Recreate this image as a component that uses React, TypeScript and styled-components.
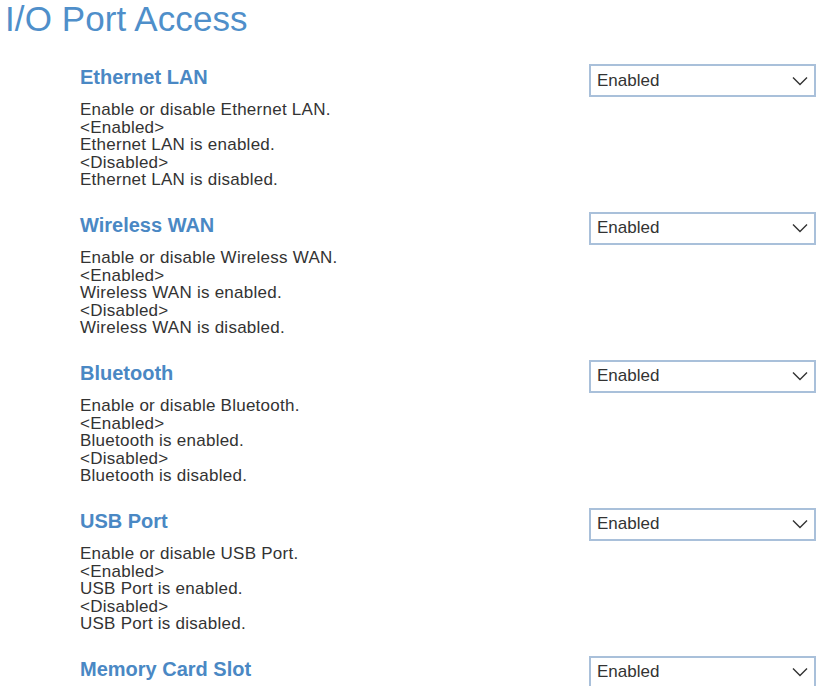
import React from "react";
import styled, { createGlobalStyle } from "styled-components";

const Global = createGlobalStyle`
  html, body { margin: 0; padding: 0; background: #ffffff; }
  body { font-family: "Liberation Sans", Arial, sans-serif; color: #333333; }
`;

const Page = styled.div`
  width: 834px;
  height: 686px;
  overflow: hidden;
  box-sizing: border-box;
`;

const Title = styled.h1`
  margin: 0 0 26px 0;
  padding-left: 5px;
  font-size: 35px;
  line-height: 38px;
  font-weight: 400;
  color: #4f8fca;
  letter-spacing: 0.1px;
`;

const Section = styled.section`
  display: flex;
  align-items: flex-start;
  padding: 0 18px 23px 80px;
`;

const Info = styled.div`
  flex: 1;
  padding-top: 1px;
`;

const Heading = styled.h2`
  margin: 0 0 12.4px 0;
  font-size: 20px;
  line-height: 24px;
  font-weight: 700;
  color: #4a88c4;
`;

const Desc = styled.div`
  font-size: 17px;
  line-height: 17.5px;
  letter-spacing: 0.25px;
  color: #333333;
`;

const SelectBox = styled.div`
  width: 227px;
  height: 33px;
  box-sizing: border-box;
  border: 2px solid #a9c0da;
  display: flex;
  align-items: center;
  justify-content: space-between;
  padding: 0 6px 0 6px;
  font-size: 17px;
  color: #333333;
  background: #fff;
`;

const Chevron = () => (
  <svg width="16" height="10" viewBox="0 0 16 10" aria-hidden="true">
    <polyline points="1,1.5 8,8.5 15,1.5" fill="none" stroke="#333" strokeWidth="1.4" />
  </svg>
);

const items = [
  { name: "Ethernet LAN", desc: true },
  { name: "Wireless WAN", desc: true },
  { name: "Bluetooth", desc: true },
  { name: "USB Port", desc: true },
  { name: "Memory Card Slot", desc: false },
];

export default function App() {
  return (
    <Page>
      <Global />
      <Title>I/O Port Access</Title>
      {items.map(({ name, desc }) => (
        <Section key={name}>
          <Info>
            <Heading>{name}</Heading>
            {desc && (
              <Desc>
                Enable or disable {name}.<br />
                &lt;Enabled&gt;<br />
                {name} is enabled.<br />
                &lt;Disabled&gt;<br />
                {name} is disabled.
              </Desc>
            )}
          </Info>
          <SelectBox>
            <span>Enabled</span>
            <Chevron />
          </SelectBox>
        </Section>
      ))}
    </Page>
  );
}
